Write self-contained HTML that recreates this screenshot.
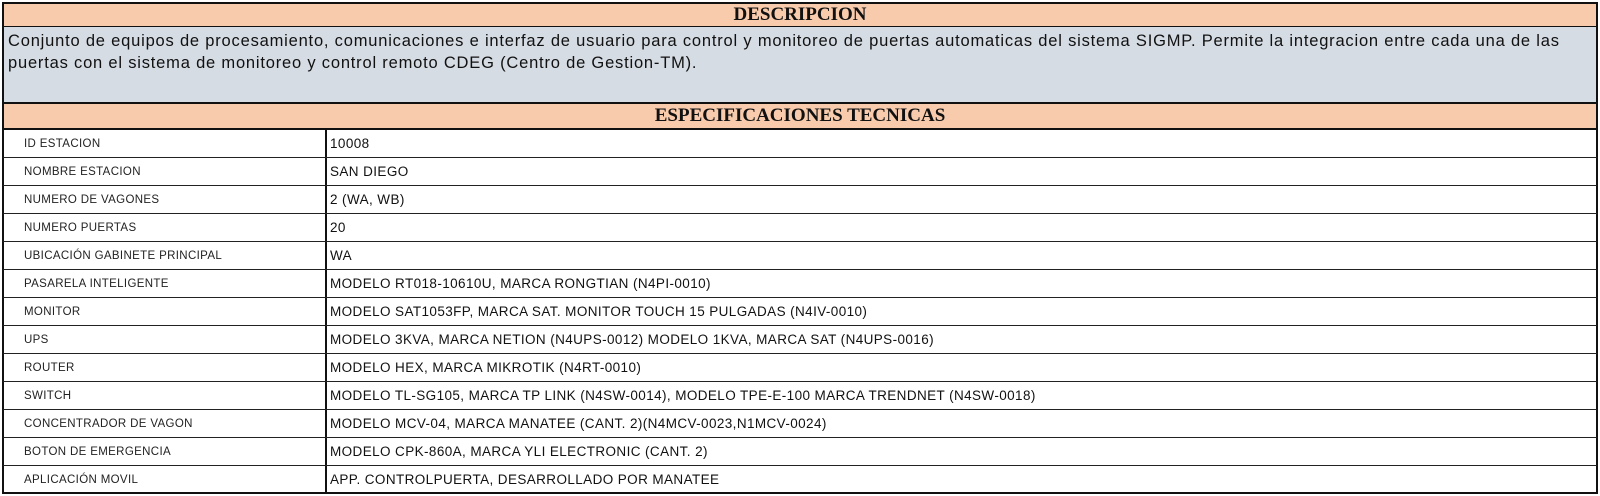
<!DOCTYPE html>
<html><head><meta charset="utf-8"><style>
body{margin:0;width:1600px;height:496px;background:#fff;overflow:hidden;font-family:"Liberation Sans",sans-serif;}
.b{position:absolute;box-sizing:border-box;}
.hdr{background:#f8cbad;border:2px solid #111;text-align:center;font-family:"Liberation Serif",serif;font-weight:bold;font-size:19px;color:#111;}
.desc{background:#d6dce4;border-left:2px solid #111;border-right:2px solid #111;font-size:16.5px;letter-spacing:.8px;color:#111;padding:3px 0 0 4px;line-height:22px;white-space:nowrap;overflow:hidden;}
.row{left:2px;width:1596px;height:28px;border-left:2px solid #111;border-right:2px solid #111;border-bottom:1.5px solid #222;}
.l{position:absolute;left:20px;top:0;line-height:28px;font-size:11.5px;letter-spacing:.35px;color:#222;}
.v{position:absolute;left:321px;top:0;height:27px;border-left:2px solid #111;padding-left:3px;font-size:13.5px;letter-spacing:.4px;color:#111;line-height:28px;white-space:nowrap;}
</style></head><body>
<div class="b hdr" style="left:2px;top:2px;width:1596px;height:26px;line-height:22px;">DESCRIPCION</div>
<div class="b desc" style="left:2px;top:27px;width:1596px;height:76px;">Conjunto de equipos de procesamiento, comunicaciones e interfaz de usuario para control y monitoreo de puertas automaticas del sistema SIGMP. Permite la integracion entre cada una de las<br>puertas con el sistema de monitoreo y control remoto CDEG (Centro de Gestion-TM).</div>
<div class="b hdr" style="left:2px;top:102px;width:1596px;height:28px;line-height:24px;">ESPECIFICACIONES TECNICAS</div>
<div class="b row" style="top:130px"><span class="l">ID ESTACION</span><span class="v">10008</span></div>
<div class="b row" style="top:158px"><span class="l">NOMBRE ESTACION</span><span class="v">SAN DIEGO</span></div>
<div class="b row" style="top:186px"><span class="l">NUMERO DE VAGONES</span><span class="v">2 (WA, WB)</span></div>
<div class="b row" style="top:214px"><span class="l">NUMERO PUERTAS</span><span class="v">20</span></div>
<div class="b row" style="top:242px"><span class="l">UBICACIÓN GABINETE PRINCIPAL</span><span class="v">WA</span></div>
<div class="b row" style="top:270px"><span class="l">PASARELA INTELIGENTE</span><span class="v">MODELO RT018-10610U, MARCA RONGTIAN (N4PI-0010)</span></div>
<div class="b row" style="top:298px"><span class="l">MONITOR</span><span class="v">MODELO SAT1053FP, MARCA SAT. MONITOR TOUCH 15 PULGADAS (N4IV-0010)</span></div>
<div class="b row" style="top:326px"><span class="l">UPS</span><span class="v">MODELO 3KVA, MARCA NETION (N4UPS-0012) MODELO 1KVA, MARCA SAT (N4UPS-0016)</span></div>
<div class="b row" style="top:354px"><span class="l">ROUTER</span><span class="v">MODELO HEX, MARCA MIKROTIK (N4RT-0010)</span></div>
<div class="b row" style="top:382px"><span class="l">SWITCH</span><span class="v">MODELO TL-SG105, MARCA TP LINK (N4SW-0014), MODELO TPE-E-100 MARCA TRENDNET (N4SW-0018)</span></div>
<div class="b row" style="top:410px"><span class="l">CONCENTRADOR DE VAGON</span><span class="v">MODELO MCV-04, MARCA MANATEE (CANT. 2)(N4MCV-0023,N1MCV-0024)</span></div>
<div class="b row" style="top:438px"><span class="l">BOTON DE EMERGENCIA</span><span class="v">MODELO CPK-860A, MARCA YLI ELECTRONIC (CANT. 2)</span></div>
<div class="b row" style="top:466px;border-bottom:2px solid #111;"><span class="l">APLICACIÓN MOVIL</span><span class="v">APP. CONTROLPUERTA, DESARROLLADO POR MANATEE</span></div>
</body></html>
